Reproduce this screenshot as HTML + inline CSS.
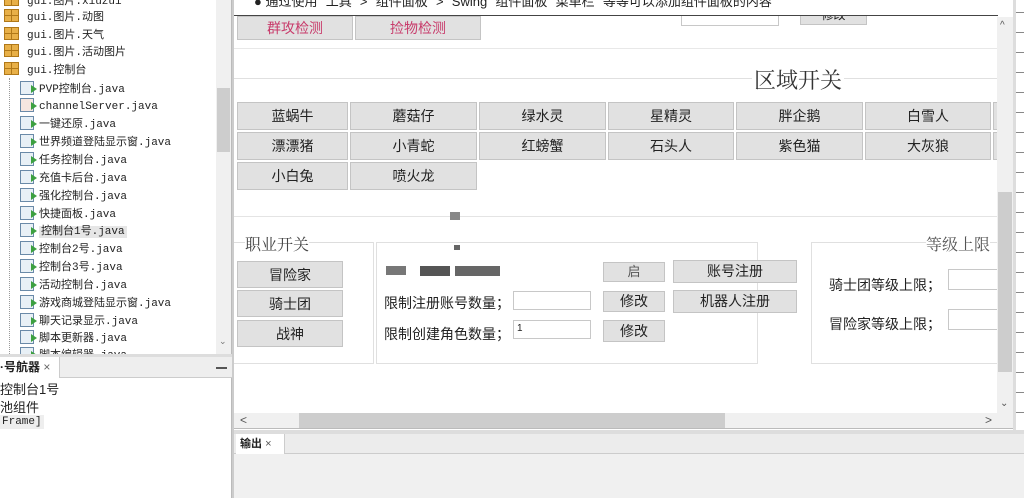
<!DOCTYPE html>
<html><head><meta charset="utf-8"><style>
*{margin:0;padding:0;box-sizing:border-box}
body{width:1024px;height:498px;overflow:hidden;background:#fff;position:relative;font-family:"Liberation Sans","Noto Sans CJK SC",sans-serif;font-size:13px;color:#222}
.a{position:absolute}
.mono{font-family:"Liberation Mono","Noto Sans CJK SC",monospace;font-size:11px}
.row{position:absolute;left:0;height:18px;line-height:18px;white-space:nowrap;font-size:12px}
.ico{display:inline-block;width:14px;height:14px;border:1px solid #6a8aa8;background:#e8f0f6;vertical-align:-3px;margin-right:5px;position:relative}
.ico:after{content:"";position:absolute;right:-4px;top:3px;border-left:6px solid #3ca040;border-top:4px solid transparent;border-bottom:4px solid transparent}
.pkg{display:inline-block;width:15px;height:13px;background:#e8b048;border:1px solid #b07818;vertical-align:-2px;margin-right:8px;position:relative}
.pkg:before{content:"";position:absolute;left:6px;top:0;width:1px;height:11px;background:#b07818}
.pkg:after{content:"";position:absolute;left:0;top:5px;width:13px;height:1px;background:#b07818}
.btn{position:absolute;background:#e1e1e1;border:1px solid #c4c4c4;text-align:center;font-size:14px;line-height:26px;color:#222}
.inp{position:absolute;background:#fff;border:1px solid #c8c8c8}
.serif{font-family:"Liberation Serif","Noto Serif CJK SC",serif}
</style></head><body>
<div class="a" style="left:0;top:0;width:232px;height:354px;background:#fff;border-right:1px solid #bbb;overflow:hidden">
<div class="row" style="top:-9px;left:4px"><span class="pkg"></span><span class="mono">gui.图片.xiuzui</span></div>
<div class="row" style="top:7px;left:4px"><span class="pkg"></span><span class="mono">gui.图片.动图</span></div>
<div class="row" style="top:25px;left:4px"><span class="pkg"></span><span class="mono">gui.图片.天气</span></div>
<div class="row" style="top:42px;left:4px"><span class="pkg"></span><span class="mono">gui.图片.活动图片</span></div>
<div class="row" style="top:60px;left:4px"><span class="pkg"></span><span class="mono">gui.控制台</span></div>
<div class="a" style="left:9px;top:78px;width:1px;height:276px;border-left:1px dotted #999"></div>
<div class="row" style="top:79px;left:20px"><span class="ico"></span><span class="mono">PVP控制台.java</span></div>
<div class="row" style="top:96px;left:20px"><span class="ico" style="background:#f6e6e0"></span><span class="mono">channelServer.java</span></div>
<div class="row" style="top:114px;left:20px"><span class="ico"></span><span class="mono">一键还原.java</span></div>
<div class="row" style="top:132px;left:20px"><span class="ico"></span><span class="mono">世界频道登陆显示窗.java</span></div>
<div class="row" style="top:150px;left:20px"><span class="ico"></span><span class="mono">任务控制台.java</span></div>
<div class="row" style="top:168px;left:20px"><span class="ico"></span><span class="mono">充值卡后台.java</span></div>
<div class="row" style="top:186px;left:20px"><span class="ico"></span><span class="mono">强化控制台.java</span></div>
<div class="row" style="top:204px;left:20px"><span class="ico"></span><span class="mono">快捷面板.java</span></div>
<div class="row" style="top:221px;left:20px"><span class="ico"></span><span class="mono" style="background:#e6e6e6;padding:0 2px">控制台1号.java</span></div>
<div class="row" style="top:239px;left:20px"><span class="ico"></span><span class="mono">控制台2号.java</span></div>
<div class="row" style="top:257px;left:20px"><span class="ico"></span><span class="mono">控制台3号.java</span></div>
<div class="row" style="top:275px;left:20px"><span class="ico"></span><span class="mono">活动控制台.java</span></div>
<div class="row" style="top:293px;left:20px"><span class="ico"></span><span class="mono">游戏商城登陆显示窗.java</span></div>
<div class="row" style="top:311px;left:20px"><span class="ico"></span><span class="mono">聊天记录显示.java</span></div>
<div class="row" style="top:328px;left:20px"><span class="ico"></span><span class="mono">脚本更新器.java</span></div>
<div class="row" style="top:345px;left:20px"><span class="ico"></span><span class="mono">脚本编辑器.java</span></div>
<div class="a" style="left:216px;top:0;width:15px;height:354px;background:#f0f0f0"></div>
<div class="a" style="left:217px;top:88px;width:13px;height:64px;background:#cdcdcd"></div>
<div class="a" style="left:219px;top:336px;font-size:9px;color:#777">⌄</div>
</div>
<div class="a" style="left:0;top:354px;width:232px;height:3px;background:#ddd"></div>
<div class="a" style="left:0;top:357px;width:232px;height:21px;background:#eee;border-bottom:1px solid #ccc"></div>
<div class="a" style="left:0;top:357px;width:60px;height:21px;background:#fff;border-right:1px solid #ccc;font-size:12px;line-height:21px;font-weight:bold">·号航器 <span style="font-weight:normal;color:#666">×</span></div>
<div class="a" style="left:216px;top:367px;width:11px;height:2px;background:#555"></div>
<div class="a" style="left:0;top:378px;width:232px;height:120px;background:#fff;border-right:1px solid #bbb"></div>
<div class="a" style="left:0;top:379px;font-size:13px">控制台1号</div>
<div class="a" style="left:0;top:397px;font-size:13px">池组件</div>
<div class="a mono" style="left:0;top:415px;background:#eee;padding:1px 2px">Frame]</div>
<div class="a" style="left:232px;top:0;width:2px;height:498px;background:#ccc"></div>
<div class="inp" style="left:681px;top:8px;width:98px;height:18px"></div>
<div class="btn" style="left:800px;top:8px;width:67px;height:17px;line-height:12px;font-size:12px">修改</div>
<div class="a" style="left:234px;top:0;width:764px;height:16px;background:#fff;border-bottom:1px solid #444;overflow:hidden">
<div style="position:absolute;left:20px;top:-9px;font-size:13px;white-space:nowrap">● 通过使用 "工具" &gt; "组件面板" &gt; "Swing" 组件面板 "菜单栏" 等等可以添加组件面板的内容</div></div>
<div class="btn" style="left:237px;top:16px;width:116px;height:24px;line-height:22px;color:#c83a6a">群攻检测</div>
<div class="btn" style="left:355px;top:16px;width:126px;height:24px;line-height:22px;color:#c83a6a">捡物检测</div>
<div class="a" style="left:234px;top:48px;width:764px;height:1px;background:#e8e8e8"></div>
<div class="a" style="left:234px;top:78px;width:764px;height:1px;background:#e0e0e0"></div>
<div class="a serif" style="left:752px;top:64px;font-size:22px;background:#fff;padding:0 2px;color:#333">区域开关</div>
<div class="btn" style="left:237px;top:102px;width:111px;height:28px">蓝蜗牛</div>
<div class="btn" style="left:350px;top:102px;width:127px;height:28px">蘑菇仔</div>
<div class="btn" style="left:479px;top:102px;width:127px;height:28px">绿水灵</div>
<div class="btn" style="left:608px;top:102px;width:126px;height:28px">星精灵</div>
<div class="btn" style="left:736px;top:102px;width:127px;height:28px">胖企鹅</div>
<div class="btn" style="left:865px;top:102px;width:126px;height:28px">白雪人</div>
<div class="btn" style="left:993px;top:102px;width:20px;height:28px"></div>
<div class="btn" style="left:237px;top:132px;width:111px;height:28px">漂漂猪</div>
<div class="btn" style="left:350px;top:132px;width:127px;height:28px">小青蛇</div>
<div class="btn" style="left:479px;top:132px;width:127px;height:28px">红螃蟹</div>
<div class="btn" style="left:608px;top:132px;width:126px;height:28px">石头人</div>
<div class="btn" style="left:736px;top:132px;width:127px;height:28px">紫色猫</div>
<div class="btn" style="left:865px;top:132px;width:126px;height:28px">大灰狼</div>
<div class="btn" style="left:993px;top:132px;width:20px;height:28px"></div>
<div class="btn" style="left:237px;top:162px;width:111px;height:28px">小白兔</div>
<div class="btn" style="left:350px;top:162px;width:127px;height:28px">喷火龙</div>
<div class="a" style="left:234px;top:216px;width:764px;height:1px;background:#e4e4e4"></div>
<div class="a" style="left:450px;top:212px;width:10px;height:8px;background:#888"></div>
<div class="a" style="left:454px;top:245px;width:6px;height:5px;background:#666"></div>
<div class="a" style="left:234px;top:242px;width:140px;height:1px;background:#ddd"></div>
<div class="a serif" style="left:245px;top:232px;font-size:16px;color:#444;background:#fff">职业开关</div>
<div class="a" style="left:373px;top:242px;width:1px;height:122px;background:#e0e0e0"></div>
<div class="a" style="left:234px;top:363px;width:140px;height:1px;background:#e0e0e0"></div>
<div class="btn" style="left:237px;top:261px;width:106px;height:27px">冒险家</div>
<div class="btn" style="left:237px;top:290px;width:106px;height:27px">骑士团</div>
<div class="btn" style="left:237px;top:320px;width:106px;height:27px">战神</div>
<div class="a" style="left:376px;top:242px;width:382px;height:122px;border:1px solid #e0e0e0"></div>
<div class="a" style="left:386px;top:266px;width:20px;height:9px;background:#777"></div>
<div class="a" style="left:420px;top:266px;width:30px;height:10px;background:#555"></div>
<div class="a" style="left:455px;top:266px;width:45px;height:10px;background:#666"></div>
<div class="btn" style="left:603px;top:262px;width:62px;height:20px;line-height:18px;color:#555;font-size:13px">启</div>
<div class="btn" style="left:673px;top:260px;width:124px;height:23px;line-height:21px">账号注册</div>
<div class="a" style="left:384px;top:293px;font-size:14px">限制注册账号数量；</div>
<div class="inp" style="left:513px;top:291px;width:78px;height:19px"></div>
<div class="btn" style="left:603px;top:291px;width:62px;height:21px;line-height:19px">修改</div>
<div class="btn" style="left:673px;top:290px;width:124px;height:23px;line-height:21px">机器人注册</div>
<div class="a" style="left:384px;top:324px;font-size:14px">限制创建角色数量；</div>
<div class="inp" style="left:513px;top:320px;width:78px;height:19px;font-size:10px;padding:2px 3px">1</div>
<div class="btn" style="left:603px;top:320px;width:62px;height:22px;line-height:20px">修改</div>
<div class="a" style="left:811px;top:242px;width:190px;height:122px;border:1px solid #e0e0e0"></div>
<div class="a serif" style="left:926px;top:232px;font-size:16px;color:#555;background:#fff">等级上限</div>
<div class="a" style="left:829px;top:275px;font-size:14px">骑士团等级上限；</div>
<div class="inp" style="left:948px;top:269px;width:52px;height:21px"></div>
<div class="a" style="left:829px;top:314px;font-size:14px">冒险家等级上限；</div>
<div class="inp" style="left:948px;top:309px;width:52px;height:21px"></div>
<div class="a" style="left:997px;top:17px;width:16px;height:396px;background:#f0f0f0"></div>
<div class="a" style="left:998px;top:192px;width:14px;height:180px;background:#cdcdcd"></div>
<div class="a" style="left:1000px;top:20px;font-size:10px;color:#555">^</div>
<div class="a" style="left:1000px;top:398px;font-size:10px;color:#555">⌄</div>
<div class="a" style="left:234px;top:413px;width:779px;height:16px;background:#f0f0f0;border-bottom:1px solid #bbb"></div>
<div class="a" style="left:299px;top:413px;width:426px;height:15px;background:#cdcdcd"></div>
<div class="a" style="left:240px;top:413px;font-size:12px;color:#555">&lt;</div>
<div class="a" style="left:985px;top:413px;font-size:12px;color:#555">&gt;</div>
<div class="a" style="left:1013px;top:0;width:3px;height:430px;background:#ddd"></div>
<div class="a" style="left:1016px;top:0;width:8px;height:430px;background:#fff;background-image:repeating-linear-gradient(180deg,transparent 0 12px,#888 12px 13px,transparent 13px 20px)"></div>
<div class="a" style="left:234px;top:430px;width:790px;height:4px;background:#ddd"></div>
<div class="a" style="left:234px;top:434px;width:790px;height:20px;background:#ececec;border-bottom:1px solid #ccc"></div>
<div class="a" style="left:236px;top:434px;width:49px;height:20px;background:#fff;border-right:1px solid #ccc;font-size:11px;line-height:20px;padding-left:4px;font-weight:bold">输出 <span style="font-weight:normal;color:#555">×</span></div>
<div class="a" style="left:234px;top:454px;width:790px;height:44px;background:#f0f0f0"></div>
</body></html>
